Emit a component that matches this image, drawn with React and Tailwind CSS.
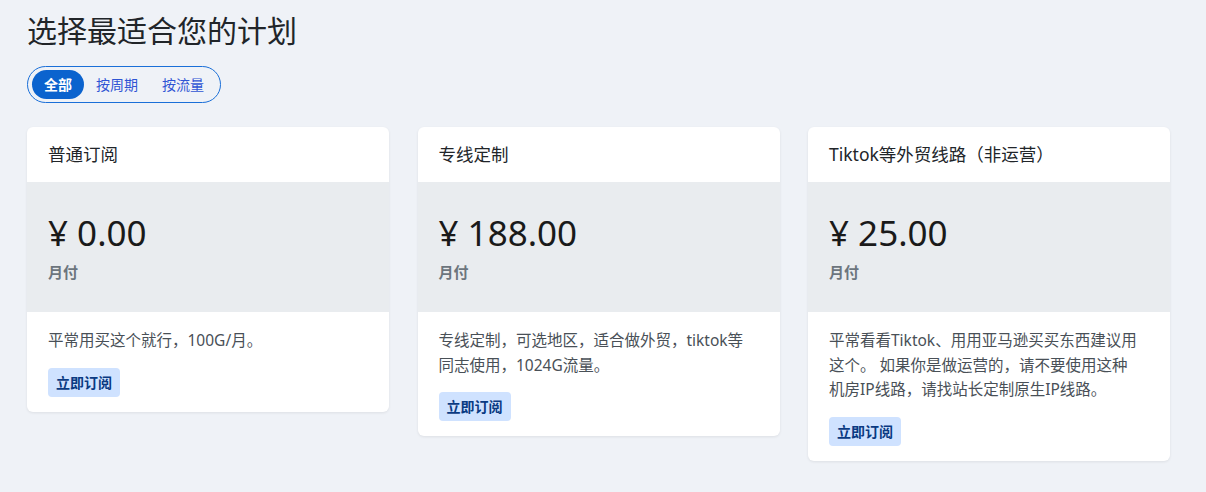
const plans = [
  {
    name: "普通订阅",
    price: "¥ 0.00",
    period: "月付",
    desc: ["平常用买这个就行，100G/月。"],
  },
  {
    name: "专线定制",
    price: "¥ 188.00",
    period: "月付",
    desc: ["专线定制，可选地区，适合做外贸，tiktok等", "同志使用，1024G流量。"],
  },
  {
    name: "Tiktok等外贸线路（非运营）",
    price: "¥ 25.00",
    period: "月付",
    desc: [
      "平常看看Tiktok、用用亚马逊买买东西建议用",
      "这个。 如果你是做运营的，请不要使用这种",
      "机房IP线路，请找站长定制原生IP线路。",
    ],
  },
];

const tabs = ["全部", "按周期", "按流量"];

function PlanCard({ plan }) {
  return (
    <div className="w-[362px] bg-white rounded-md shadow-[0_1px_3px_rgba(0,0,0,0.08)] overflow-hidden">
      {/* Header */}
      <div className="h-[55px] flex items-center px-[21px] text-[17.5px] text-[#212529]">
        {plan.name}
      </div>

      {/* Price */}
      <div className="bg-[#e9ecef] h-[130px] px-[21px] pt-[28px]">
        <div className="text-[35px] leading-[46px] text-[#1a1a1a]">
          {plan.price}
        </div>
        <div className="mt-[5px] text-[15px] leading-[22px] font-bold text-[#6c757d]">
          {plan.period}
        </div>
      </div>

      {/* Body */}
      <div className="px-[21px] pt-[16px] pb-[15px]">
        <p className="text-[15.5px] leading-[24.5px] text-[#495057] whitespace-nowrap">
          {plan.desc.map((line, i) => (
            <span key={i}>
              {i > 0 && <br />}
              {line}
            </span>
          ))}
        </p>
        <button className="mt-[15px] h-[29px] px-[8px] rounded bg-[#cfe2ff] text-[14px] font-bold text-[#0a3a82]">
          立即订阅
        </button>
      </div>
    </div>
  );
}

export default function App() {
  return (
    <div
      className="min-h-[492px] bg-[#eff2f7] px-[27px] pt-[10px]"
      style={{ fontFamily: '"Noto Sans", "Noto Sans CJK SC", sans-serif' }}
    >
      <h2 className="text-[30px] leading-[42px] text-[#212529]">
        选择最适合您的计划
      </h2>

      {/* Filter tabs */}
      <div className="mt-[14px] inline-flex items-center h-[37px] px-[4px] rounded-full border border-[#1a6fd8]">
        {tabs.map((t, i) => (
          <button
            key={t}
            className={
              i === 0
                ? "h-[29px] px-[12px] rounded-full bg-[#0b63ce] text-white text-[14px] font-bold"
                : "h-[29px] px-[12px] rounded-full text-[#2f55d4] text-[14px]"
            }
          >
            {t}
          </button>
        ))}
      </div>

      {/* Cards */}
      <div className="mt-[24px] flex items-start gap-[28.5px]">
        {plans.map((p) => (
          <PlanCard key={p.name} plan={p} />
        ))}
      </div>
    </div>
  );
}
